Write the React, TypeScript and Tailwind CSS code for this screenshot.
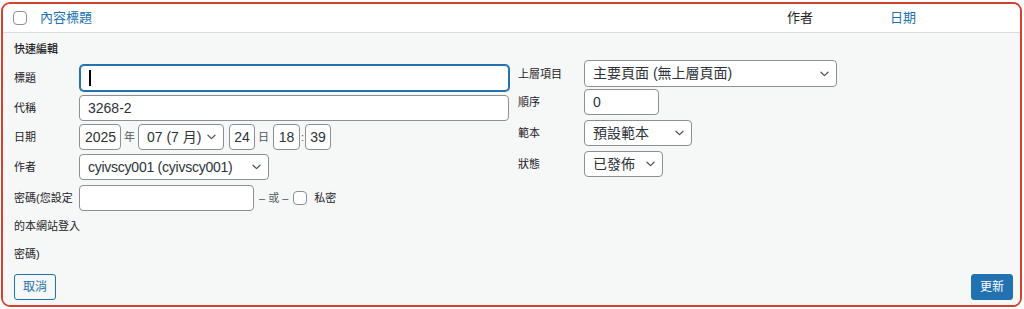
import React from "react";

const Chevron = () => (
  <svg width="9" height="6" viewBox="0 0 9 6" className="shrink-0">
    <path d="M1 1.2 L4.5 4.6 L8 1.2" fill="none" stroke="#50575e" strokeWidth="1.3" strokeLinecap="round" strokeLinejoin="round" />
  </svg>
);

const Box = ({ w, children, className = "" }: { w: string; children?: React.ReactNode; className?: string }) => (
  <div className={`${w} h-[26px] shrink-0 bg-white border border-[#8c8f94] rounded-[4px] flex items-center text-[14px] text-[#2c3338] ${className}`}>
    {children}
  </div>
);

const Select = ({ w, text, h = "h-[26px]", className = "" }: { w: string; text: string; h?: string; className?: string }) => (
  <div className={`${w} ${h} shrink-0 bg-white border border-[#8c8f94] rounded-[4px] flex items-center justify-between pl-[8px] pr-[7px] text-[14px] text-[#2c3338] ${className}`}>
    <span className="whitespace-nowrap">{text}</span>
    <Chevron />
  </div>
);

const Label = ({ children, w = "w-[65px]" }: { children: React.ReactNode; w?: string }) => (
  <div className={`${w} shrink-0 whitespace-nowrap text-[11px] text-[#1d2327] leading-[26px]`}>{children}</div>
);

export default function App() {
  return (
    <div className="w-[1024px] h-[309px] bg-white pt-[2px] pl-[1px] font-['Helvetica_Neue','Liberation_Sans','Noto_Sans_CJK_TC',sans-serif]">
      <div className="w-[1021px] h-[305px] border-2 border-[#d6402c] rounded-[9px] overflow-hidden flex flex-col">
        {/* header */}
        <div className="h-[29px] shrink-0 bg-white border-b border-[#dcdcde] flex items-center text-[13px]">
          <div className="ml-[10px] w-[14px] h-[14px] border border-[#8c8f94] rounded-[4px] bg-white" />
          <div className="ml-[13px] text-[#2271b1]">內容標題</div>
          <div className="ml-[695px] text-[#1d2327]">作者</div>
          <div className="ml-[77px] text-[#2271b1]">日期</div>
        </div>
        {/* body */}
        <div className="flex-1 min-h-0 bg-[#f6f7f7] flex flex-col pl-[11px] pr-[7px]">
          <div className="flex">
            {/* left fieldset */}
            <div className="w-[495px] flex flex-col">
              <div className="h-[28px] mt-[2px] text-[11px] leading-[28px] text-[#1d2327] font-medium">快速編輯</div>
              <div className="flex mt-[2px]">
                <Label>標題</Label>
                <div className="w-[430px] h-[26px] bg-white border border-[#2271b1] shadow-[0_0_0_1px_#2271b1] rounded-[4px] ml-[1px] flex items-center pl-[8px]">
                  <div className="w-[1.5px] h-[16px] bg-black" />
                </div>
              </div>
              <div className="flex mt-[4px]">
                <Label>代稱</Label>
                <Box w="w-[430px]" className="pl-[8px]">3268-2</Box>
              </div>
              <div className="flex mt-[3px] items-center">
                <Label>日期</Label>
                <Box w="w-[42px]" className="pl-[5px]">2025</Box>
                <span className="text-[11px] text-[#50575e] mx-[3px]">年</span>
                <Select w="w-[86px]" text="07 (7 月)" />
                <Box w="w-[26px]" className="ml-[5px] justify-center">24</Box>
                <span className="text-[11px] text-[#50575e] ml-[3px] mr-[4px]">日</span>
                <Box w="w-[27px]" className="justify-center">18</Box>
                <span className="text-[11px] text-[#50575e] mx-[1px]">:</span>
                <Box w="w-[26px]" className="justify-center">39</Box>
              </div>
              <div className="flex mt-[4px]">
                <Label>作者</Label>
                <Select w="w-[190px]" text="cyivscy001 (cyivscy001)" className="tracking-[-0.25px]" />
              </div>
              <div className="flex mt-[5px]">
                <div className="w-[65px] shrink-0 whitespace-nowrap text-[11px] text-[#1d2327] leading-[28px] -mt-[1px]">
                  密碼(您設定
                  <br />
                  的本網站登入
                  <br />
                  密碼)
                </div>
                <div className="flex items-center h-[26px]">
                  <Box w="w-[175px]" />
                  <span className="text-[11px] text-[#50575e] ml-[5px]">– 或 –</span>
                  <div className="ml-[5px] w-[14px] h-[14px] border border-[#8c8f94] rounded-[4px] bg-white" />
                  <span className="text-[11px] text-[#1d2327] ml-[7px]">私密</span>
                </div>
              </div>
            </div>
            {/* right fieldset */}
            <div className="ml-[9px] flex flex-col pt-[27px]">
              <div className="flex items-center">
                <Label w="w-[66px]">上層項目</Label>
                <Select w="w-[253px]" h="h-[27px]" text="主要頁面 (無上層頁面)" />
              </div>
              <div className="flex items-center mt-[2px]">
                <Label w="w-[66px]">順序</Label>
                <Box w="w-[75px]" className="pl-[8px]">0</Box>
              </div>
              <div className="flex items-center mt-[5px]">
                <Label w="w-[66px]">範本</Label>
                <Select w="w-[108px]" text="預設範本" />
              </div>
              <div className="flex items-center mt-[5px]">
                <Label w="w-[66px]">狀態</Label>
                <Select w="w-[79px]" text="已發佈" />
              </div>
            </div>
          </div>
          <div className="mt-auto mb-[5px] flex justify-between">
            <div className="w-[42px] h-[26px] border border-[#2271b1] rounded-[3px] bg-[#f6f7f7] text-[#2271b1] text-[12px] flex items-center justify-center">
              取消
            </div>
            <div className="w-[42px] h-[26px] border border-[#2271b1] rounded-[3px] bg-[#2271b1] text-white text-[12px] flex items-center justify-center">
              更新
            </div>
          </div>
        </div>
      </div>
    </div>
  );
}
